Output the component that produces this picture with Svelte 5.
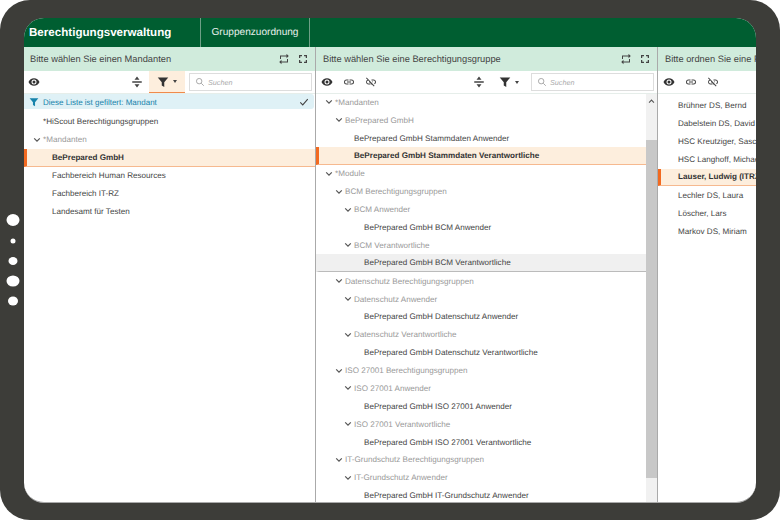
<script>
  const mandanten = [
    { text: '*HiScout Berechtigungsgruppen', level: 1, leaf: true },
    { text: '*Mandanten', level: 0 },
    { text: 'BePrepared GmbH', level: 1, leaf: true, selected: true },
    { text: 'Fachbereich Human Resources', level: 1, leaf: true },
    { text: 'Fachbereich IT-RZ', level: 1, leaf: true },
    { text: 'Landesamt für Testen', level: 1, leaf: true }
  ];

  const gruppen = [
    { text: '*Mandanten', level: 0 },
    { text: 'BePrepared GmbH', level: 1 },
    { text: 'BePrepared GmbH Stammdaten Anwender', level: 2, leaf: true },
    { text: 'BePrepared GmbH Stammdaten Verantwortliche', level: 2, leaf: true, selected: true },
    { text: '*Module', level: 0 },
    { text: 'BCM Berechtigungsgruppen', level: 1 },
    { text: 'BCM Anwender', level: 2 },
    { text: 'BePrepared GmbH BCM Anwender', level: 3, leaf: true },
    { text: 'BCM Verantwortliche', level: 2 },
    { text: 'BePrepared GmbH BCM Verantwortliche', level: 3, leaf: true, hover: true },
    { text: 'Datenschutz Berechtigungsgruppen', level: 1 },
    { text: 'Datenschutz Anwender', level: 2 },
    { text: 'BePrepared GmbH Datenschutz Anwender', level: 3, leaf: true },
    { text: 'Datenschutz Verantwortliche', level: 2 },
    { text: 'BePrepared GmbH Datenschutz Verantwortliche', level: 3, leaf: true },
    { text: 'ISO 27001 Berechtigungsgruppen', level: 1 },
    { text: 'ISO 27001 Anwender', level: 2 },
    { text: 'BePrepared GmbH ISO 27001 Anwender', level: 3, leaf: true },
    { text: 'ISO 27001 Verantwortliche', level: 2 },
    { text: 'BePrepared GmbH ISO 27001 Verantwortliche', level: 3, leaf: true },
    { text: 'IT-Grundschutz Berechtigungsgruppen', level: 1 },
    { text: 'IT-Grundschutz Anwender', level: 2 },
    { text: 'BePrepared GmbH IT-Grundschutz Anwender', level: 3, leaf: true }
  ];

  const personen = [
    { text: 'Brühner DS, Bernd' },
    { text: 'Dabelstein DS, David' },
    { text: 'HSC Kreutziger, Sascha' },
    { text: 'HSC Langhoff, Michael' },
    { text: 'Lauser, Ludwig (ITRZ)', selected: true },
    { text: 'Lechler DS, Laura' },
    { text: 'Löscher, Lars' },
    { text: 'Markov DS, Miriam' }
  ];
</script>

{#snippet eye()}
  <svg class="ico eye" viewBox="0 0 24 24"><path fill="#333" d="M12 4.500C7 4.500 2.700 7.600 1 12c1.700 4.400 6 7.500 11 7.500s9.300-3.100 11-7.500c-1.700-4.400-6-7.500-11-7.500zM12 17a5 5 0 1 1 0-10 5 5 0 0 1 0 10zm0-8a3 3 0 1 0 0 6 3 3 0 0 0 0-6z"/></svg>
{/snippet}

{#snippet link()}
  <svg class="ico" viewBox="0 0 24 24"><path fill="#444" d="M3.900 12c0-1.700 1.400-3.100 3.100-3.100h4V7H7a5 5 0 0 0 0 10h4v-1.900H7c-1.700 0-3.100-1.400-3.100-3.100zM8 13h8v-2H8v2zm9-6h-4v1.900h4c1.700 0 3.100 1.400 3.100 3.100s-1.400 3.100-3.100 3.100h-4V17h4a5 5 0 0 0 0-10z"/></svg>
{/snippet}

{#snippet unlink()}
  <svg class="ico" viewBox="0 0 24 24"><path fill="#444" d="M17 7h-4v1.900h4c1.700 0 3.100 1.400 3.100 3.100 0 1.300-.8 2.400-1.900 2.900l1.400 1.400A5 5 0 0 0 17 7zm-1 4h-2.200l2 2H16v-2zM2 4.300l3.100 3.100A5 5 0 0 0 7 17h4v-1.900H7c-1.700 0-3.100-1.400-3.100-3.100 0-1.600 1.200-2.900 2.700-3.100l2.100 2.100H8v2h1.700l2.300 2.300V17h1.700l4 4 1.400-1.400L3.400 2.900 2 4.300z"/></svg>
{/snippet}

{#snippet split()}
  <svg class="ico" viewBox="0 0 24 24"><path fill="#444" d="M12 1 17 7.500H7zM2.500 10.500h19v3h-19zM12 23 7 16.500h10z"/></svg>
{/snippet}

{#snippet funnel(color = '#333')}
  <svg class="ico" viewBox="0 0 24 24"><path fill={color} d="M1.500 3h21l-8 9.500V22l-5-3v-6.500z"/></svg>
{/snippet}

{#snippet swap()}
  <svg class="ico" viewBox="0 0 24 24"><path fill="#444" d="M6 7h11v3.500L21.500 6 17 1.500V5H4v7h2zM18 17H7v-3.500L2.500 18 7 22.500V19h13v-7h-2z"/></svg>
{/snippet}

{#snippet corners()}
  <svg class="ico" viewBox="0 0 24 24"><path fill="#444" d="M4 10h2.500V6.500H10V4H4zM14 4v2.500h3.500V10H20V4zM17.500 17.500H14V20h6v-6h-2.500zM6.500 14H4v6h6v-2.500H6.500z"/></svg>
{/snippet}

{#snippet searchBox()}
  <div class="search">
    <svg class="lens" viewBox="0 0 24 24"><path fill="none" stroke="#aaa" stroke-width="2.400" d="M10 3.500a6.500 6.500 0 1 0 0 13 6.500 6.500 0 0 0 0-13zM15 15l6 6"/></svg>
    <span>Suchen</span>
  </div>
{/snippet}

{#snippet chevron()}
  <svg class="chev" viewBox="0 0 10 10"><path fill="none" stroke="#555" stroke-width="1.500" d="M1.500 3 5 6.500 8.500 3"/></svg>
{/snippet}

{#snippet row(item)}
  <div class="row lv{item.level}" class:leaf={item.leaf} class:selected={item.selected} class:hover={item.hover}>
    {#if !item.leaf}{@render chevron()}{/if}
    <span>{item.text}</span>
  </div>
{/snippet}

<div class="device">
  <div class="dots">
    <i class="d1"></i><i class="d2"></i><i class="d3"></i><i class="d4"></i><i class="d5"></i>
  </div>
  <div class="screen">
    <header>
      <div class="brand">Berechtigungsverwaltung</div>
      <div class="tab">Gruppenzuordnung</div>
    </header>
    <main>
      <section class="col first">
        <div class="head">
          <span>Bitte wählen Sie einen Mandanten</span>
          <div class="head-icons">{@render swap()}{@render corners()}</div>
        </div>
        <div class="tools">
          <div class="left">{@render eye()}</div>
          <div class="right">
            {@render split()}
            <div class="filter active">{@render funnel()}<b class="caret"></b></div>
            {@render searchBox()}
          </div>
        </div>
        <div class="banner">
          {@render funnel('#1783ab')}
          <span>Diese Liste ist gefiltert: Mandant</span>
          <svg class="check" viewBox="0 0 12 12"><path fill="none" stroke="#444" stroke-width="1.300" d="M1.500 6.500 4.500 9.500 10.500 2.500"/></svg>
        </div>
        <div class="list">
          {#each mandanten as item}{@render row(item)}{/each}
        </div>
      </section>

      <section class="col second">
        <div class="head">
          <span>Bitte wählen Sie eine Berechtigungsgruppe</span>
          <div class="head-icons">{@render swap()}{@render corners()}</div>
        </div>
        <div class="tools">
          <div class="left">{@render eye()}{@render link()}{@render unlink()}</div>
          <div class="right">
            {@render split()}
            <div class="filter">{@render funnel()}<b class="caret"></b></div>
            {@render searchBox()}
          </div>
        </div>
        <div class="body">
          <div class="list">
            {#each gruppen as item}{@render row(item)}{/each}
          </div>
          <div class="scrollbar">
            <svg viewBox="0 0 10 10"><path fill="none" stroke="#555" stroke-width="1.500" d="M1.500 6.500 5 3 8.500 6.500"/></svg>
            <div class="thumb"></div>
          </div>
        </div>
      </section>

      <section class="col third">
        <div class="head">
          <span>Bitte ordnen Sie eine Person zu</span>
        </div>
        <div class="tools">
          <div class="left">{@render eye()}{@render link()}{@render unlink()}</div>
        </div>
        <div class="list people">
          {#each personen as item}
            <div class="row person" class:selected={item.selected}><span>{item.text}</span></div>
          {/each}
        </div>
      </section>
    </main>
  </div>
</div>

<style>
  :global(body) {
    margin: 0;
    background: #fff;
  }

  * {
    box-sizing: border-box;
  }

  .device {
    position: relative;
    width: 780px;
    height: 520px;
    padding: 18px 24px 17px;
    background: #3d3d39;
    border-radius: 30px;
    font-family: "Liberation Sans", Arial, sans-serif;
    text-rendering: geometricPrecision;
    overflow: hidden;
  }

  .dots {
    position: absolute;
    left: 0;
    top: 0;
  }

  .dots i {
    position: absolute;
    display: block;
    background: #fff;
    border-radius: 50%;
    transform: translate(-50%, -50%);
  }

  .d1 { left: 12.500px; top: 220px; width: 13px; height: 12px; }
  .d2 { left: 12.500px; top: 240.500px; width: 5px; height: 5px; }
  .d3 { left: 12.500px; top: 260.500px; width: 9px; height: 8px; }
  .d4 { left: 12.500px; top: 281px; width: 13px; height: 11px; }
  .d5 { left: 13px; top: 300.500px; width: 10px; height: 9px; }

  .screen {
    height: 100%;
    background: #fff;
    border-radius: 20px;
    overflow: hidden;
    display: flex;
    flex-direction: column;
    border-bottom: 1px solid #aaa;
  }

  header {
    flex: 0 0 29px;
    background: #005e31;
    color: #fff;
    display: flex;
  }

  .brand {
    width: 177px;
    padding: 8px 0 0 5px;
    font-size: 11.600px;
    font-weight: bold;
    border-right: 1px solid #6e9f86;
  }

  .tab {
    width: 109px;
    text-align: center;
    padding-top: 9px;
    font-size: 10.100px;
    color: #e8f0ec;
    border-right: 1px solid #6e9f86;
  }

  main {
    flex: 1;
    min-height: 0;
    display: flex;
  }

  .col {
    display: flex;
    flex-direction: column;
    min-width: 0;
    border-right: 1px solid #aaa;
  }

  .first { width: 292px; }
  .second { width: 342px; }
  .third { flex: 1; border-right: 0; }

  .head {
    flex: 0 0 24px;
    background: #d0ebdc;
    display: flex;
    align-items: center;
    justify-content: space-between;
    padding: 0 6px;
    font-size: 9.300px;
    color: #444;
    white-space: nowrap;
    overflow: hidden;
  }

  .second .head { padding-left: 7px; }
  .third .head { padding-left: 7px; }

  .head-icons {
    display: flex;
    gap: 7px;
  }

  .tools {
    flex: 0 0 23px;
    display: flex;
    align-items: center;
    justify-content: space-between;
    padding: 0 3px 0 4px;
    border-bottom: 1px solid #e6eeea;
  }

  .left {
    display: flex;
    gap: 10px;
  }

  .second .left, .third .left { padding-left: 1px; }

  .right {
    display: flex;
    align-items: center;
    height: 100%;
  }

  .ico {
    width: 12px;
    height: 12px;
    display: block;
    flex: none;
  }

  .filter {
    width: 36px;
    height: 22px;
    margin: 0 4px 0 6px;
    display: flex;
    align-items: center;
    justify-content: center;
    gap: 4px;
  }

  .filter.active {
    background: #fdeedd;
    border-bottom: 1px solid #f08a4b;
  }

  .caret {
    width: 0;
    height: 0;
    border: 2.500px solid transparent;
    border-top: 3px solid #444;
    border-bottom: 0;
  }

  .search {
    width: 123px;
    height: 18px;
    border: 1px solid #ddd;
    display: flex;
    align-items: center;
    gap: 3px;
    padding-left: 5px;
    font-size: 7.200px;
    font-style: italic;
    color: #aaa;
  }

  .lens {
    width: 10px;
    height: 10px;
  }

  .banner {
    flex: 0 0 15px;
    margin-right: 1px;
    background: #dff1f6;
    border-radius: 0 3px 3px 0;
    display: flex;
    align-items: center;
    gap: 4px;
    padding: 1px 5px 0;
    font-size: 8px;
    color: #1783ab;
  }

  .banner .ico {
    width: 10px;
    height: 10px;
  }

  .check {
    width: 10px;
    height: 10px;
    margin-left: auto;
  }

  .list {
    flex: 1;
    min-width: 0;
    overflow: hidden;
  }

  .first .list {
    padding-top: 4px;
  }

  .second .list {
    margin-top: -0.500px;
  }

  .row {
    height: 17.880px;
    flex: none;
    display: flex;
    align-items: center;
    font-size: 8.100px;
    color: #999;
    white-space: nowrap;
    border-left: 3px solid transparent;
  }

  .row.leaf, .row.person {
    color: #444;
  }

  .row.selected {
    background: #fdeedd;
    border-left-color: #f26a21;
    border-bottom: 1px solid #f6b98f;
    color: #333;
    font-weight: bold;
  }

  .row.hover {
    background: #f0f0f0;
    border-bottom: 1px solid #bbb;
  }

  .chev {
    width: 8px;
    height: 8px;
    margin-right: 2px;
    flex: none;
  }

  .lv0 { padding-left: 6px; }
  .lv1 { padding-left: 16px; }
  .lv2 { padding-left: 25px; }
  .lv2.leaf { padding-left: 35px; }
  .lv3.leaf { padding-left: 45px; }

  .first .lv0 { padding-left: 6px; }
  .first .lv1 { padding-left: 25px; }

  .first .row:first-child { padding-left: 16px; }

  .body {
    flex: 1;
    min-height: 0;
    display: flex;
  }

  .scrollbar {
    flex: 0 0 11px;
    background: #f1f1f1;
    display: flex;
    flex-direction: column;
    padding-top: 4px;
  }

  .scrollbar svg {
    width: 9px;
    height: 7px;
    margin: 0 auto 35px;
    flex: none;
  }

  .thumb {
    height: 338px;
    background: #c8c8c8;
  }

  .people {
    padding-top: 3px;
  }

  .person {
    padding-left: 17px;
  }
</style>
